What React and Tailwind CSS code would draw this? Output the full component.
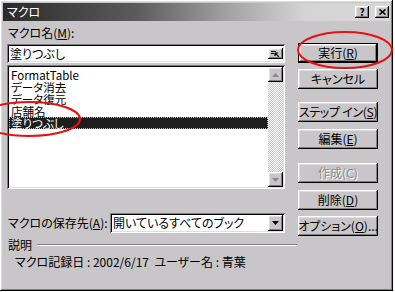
import React from "react";

// win98 style bevels
const raised =
  "bg-[#c8c6c8] shadow-[inset_-1px_-1px_#000,inset_1px_1px_#fff,inset_-2px_-2px_#808080,inset_2px_2px_#dfdfdf]";
const sunken =
  "bg-white shadow-[inset_1px_1px_#808080,inset_-1px_-1px_#fff,inset_2px_2px_#000,inset_-2px_-2px_#dfdfdf]";

const Btn = ({ className = "", def, disabled, children }) => (
  <div className={`${className} h-[20px] w-[80px] ${def ? "border border-black" : ""}`}>
    <div
      className={`flex h-full w-full items-center justify-center whitespace-nowrap leading-none ${raised} ${
        disabled ? "text-[#8a8a8a] [text-shadow:1px_1px_#fff]" : "text-black"
      }`}
    >
      {children}
    </div>
  </div>
);

const Arrow = ({ up, dim }) => (
  <svg width="7" height="4" viewBox="0 0 7 4">
    {up ? (
      <path d="M3.5 0 L7 4 L0 4 Z" fill={dim ? "#8a8a8a" : "#000"} />
    ) : (
      <path d="M0 0 L7 0 L3.5 4 Z" fill={dim ? "#8a8a8a" : "#000"} />
    )}
  </svg>
);

const items = ["FormatTable", "データ消去", "データ復元", "店舗名", "塗りつぶし"];

export default function App() {
  return (
    <div className="relative h-[292px] w-[395px] overflow-hidden bg-white font-['Noto_Sans_CJK_JP',sans-serif] text-[12px] text-black [font-feature-settings:'palt']">
      <div className={`flex h-[291px] w-[393px] flex-col ${raised}`}>
        {/* title bar */}
        <div className="mx-[3px] mt-[3px] flex h-[18px] items-center justify-between bg-[linear-gradient(to_right,#2a2a2a,#5c5c5c_35%,#a2a2a2_58%,#d4d4d4_78%,#d8d8d8)] pl-[4px] pr-[1px]">
          <span className="leading-none text-white">マクロ</span>
          <div className="flex gap-[6px]">
            <div className={`flex h-[12px] w-[14px] items-center justify-center ${raised}`}>
              <span className="text-[10px] font-bold leading-none">?</span>
            </div>
            <div className={`flex h-[12px] w-[14px] items-center justify-center ${raised}`}>
              <svg width="7" height="6" viewBox="0 0 7 6">
                <path d="M0.5 0.5 L6.5 5.5 M6.5 0.5 L0.5 5.5" stroke="#000" strokeWidth="1.6" />
              </svg>
            </div>
          </div>
        </div>

        {/* body */}
        <div className="flex items-start">
          <div className="ml-[7px] flex w-[278px] flex-col pt-[5px]">
            <div className="h-[14px] pl-[1px] leading-[14px]">
              マクロ名(<span className="underline">M</span>):
            </div>
            <div className={`mt-[4px] flex h-[19px] items-center justify-between pl-[3px] pr-[2px] ${sunken}`}>
              <span className="leading-none">塗りつぶし</span>
              <div className={`flex h-[11px] w-[15px] items-center justify-center ${raised}`}>
                <svg width="9" height="7" viewBox="0 0 9 7">
                  <path d="M0 1.5 H5 M0 3.5 H3" stroke="#000" strokeWidth="1" />
                  <path d="M4 3 L8 7 M4 3 L4 6 M4 3 L7 3" stroke="#000" strokeWidth="1.2" />
                </svg>
              </div>
            </div>
            <div className={`mt-[2px] flex h-[124px] p-[2px] ${sunken}`}>
              <div className="flex flex-1 flex-col pt-[2px]">
                {items.map((t, i) => (
                  <div
                    key={t}
                    className={`h-[12px] pl-[2px] text-[11.5px] leading-[12px] ${
                      i === 4
                        ? "bg-[#1e1e1e] text-white outline-1 -outline-offset-1 outline-dotted outline-[#bdbdbd]"
                        : ""
                    }`}
                  >
                    {t}
                  </div>
                ))}
              </div>
              <div className="flex w-[15px] flex-col">
                <div className={`flex h-[15px] items-center justify-center ${raised}`}>
                  <Arrow up dim />
                </div>
                <div className="flex-1 bg-[repeating-conic-gradient(#c8c6c8_0_25%,#fff_0_50%)] bg-[length:2px_2px]" />
                <div className={`flex h-[15px] items-center justify-center ${raised}`}>
                  <Arrow dim />
                </div>
              </div>
            </div>
            <div className="mt-[24px] flex h-[20px] items-center">
              <div className="w-[103px] pl-[1px] leading-none">
                マクロの保存先(<span className="underline">A</span>):
              </div>
              <div className={`flex h-full flex-1 items-center justify-between p-[2px] ${sunken}`}>
                <span className="pl-[1px] leading-none">開いているすべてのブック</span>
                <div className={`flex h-full w-[15px] items-center justify-center ${raised}`}>
                  <Arrow />
                </div>
              </div>
            </div>
          </div>

          <div className="ml-[13px] flex flex-col">
            <Btn def className="mt-[22px]">
              実行(<span className="underline">R</span>)
            </Btn>
            <Btn className="mt-[6px]">キャンセル</Btn>
            <Btn className="mt-[13px]">
              <span className="tracking-[-0.3px]">
                ステップ イン(<span className="underline">S</span>)
              </span>
            </Btn>
            <Btn className="mt-[7px]">
              編集(<span className="underline">E</span>)
            </Btn>
            <Btn disabled className="mt-[14px]">
              作成(C)
            </Btn>
            <Btn className="mt-[7px]">
              削除(<span className="underline">D</span>)
            </Btn>
            <Btn className="mt-[6px]">
              オプション(<span className="underline">O</span>)...
            </Btn>
          </div>
        </div>

        {/* description */}
        <div className="ml-[7px] mt-[2px] flex h-[14px] items-center">
          <span className="pl-[1px] leading-none">説明</span>
          <div className="ml-[5px] h-[2px] w-[260px] border-t border-b border-t-[#808080] border-b-white" />
        </div>
        <div className="ml-[15px] mt-[3px] h-[14px] whitespace-pre leading-[14px]">
          マクロ記録日 : 2002/6/17  ユーザー名 : 青葉
        </div>
      </div>

      {/* red annotation ellipses */}
      <svg className="pointer-events-none absolute inset-0" width="395" height="292">
        <ellipse cx="345" cy="50" rx="47" ry="18" fill="none" stroke="#e81010" strokeWidth="2" />
        <ellipse cx="29" cy="119" rx="51" ry="17" fill="none" stroke="#e81010" strokeWidth="2" />
      </svg>
    </div>
  );
}
